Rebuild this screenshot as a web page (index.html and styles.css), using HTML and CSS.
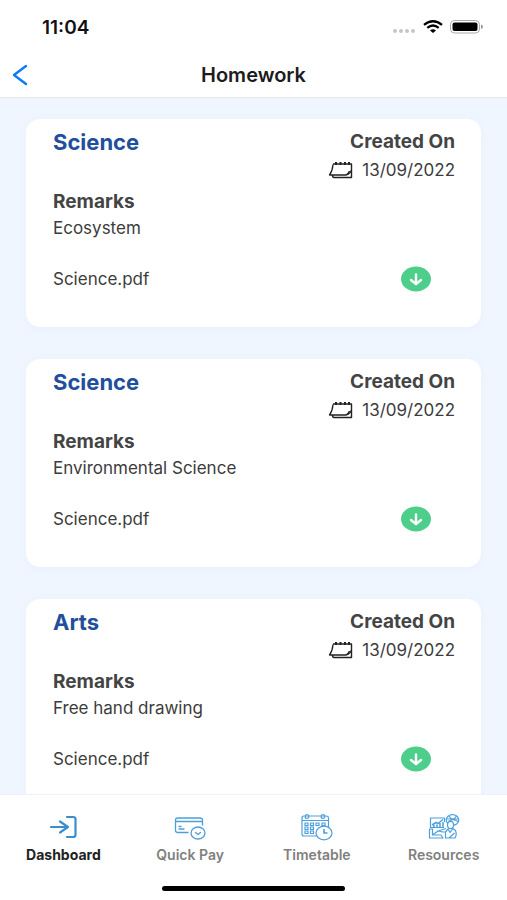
FILE: index.html
```html
<!DOCTYPE html>
<html lang="en">
<head>
<meta charset="UTF-8">
<meta name="viewport" content="width=device-width, initial-scale=1.0">
<title>Homework</title>
<link rel="stylesheet" href="styles.css">
</head>
<body>

<!-- shared icons -->
<svg class="sprite" aria-hidden="true">
  <symbol id="icon-date" viewBox="0 0 26 20">
    <path d="M5 4.500Q4.500 11 1.500 15H18Q20.500 13.500 21.500 11" fill="none" stroke="#222" stroke-width="1.300" stroke-linejoin="round"/>
    <path d="M5 4H23.500V17.500H6Q4.500 17.500 4.500 15" fill="none" stroke="#222" stroke-width="1.400" stroke-linejoin="round"/>
    <path d="M18 15Q22 14 23.500 10" fill="none" stroke="#222" stroke-width="1.200"/>
    <path d="M8 2V5M12.500 2V5M17 2V5M21 2V5" stroke="#222" stroke-width="2"/>
  </symbol>
  <symbol id="icon-download" viewBox="0 0 30 26">
    <ellipse cx="15" cy="13" rx="15" ry="12.500" fill="#4dcf8b"/>
    <path d="M15 8.500V17.500M10 14L15 18L20 14" fill="none" stroke="#fff" stroke-width="2.400" stroke-linecap="round" stroke-linejoin="round"/>
  </symbol>
</svg>

<header>
  <div class="status-bar">
    <span class="time">11:04</span>
    <div class="status-icons">
      <svg width="24" height="14" viewBox="0 0 24 14" aria-hidden="true">
        <g fill="#c6c6c6"><circle cx="3" cy="11" r="2"/><circle cx="9" cy="11" r="2"/><circle cx="15" cy="11" r="2"/><circle cx="21" cy="11" r="2"/></g>
      </svg>
      <svg width="20" height="14" viewBox="0 0 20 14" aria-hidden="true">
        <path d="M1 4.800Q10 -2.400 19 4.800M4.300 7.800Q10 3.200 15.700 7.800" fill="none" stroke="#000" stroke-width="2.300"/>
        <path d="M7 10.400Q10 8 13 10.400L10 13Z" fill="#000"/>
      </svg>
      <svg width="34" height="14" viewBox="0 0 34 14" aria-hidden="true">
        <rect x="0.500" y="0.500" width="29" height="12.500" rx="4" fill="none" stroke="#aaa"/>
        <rect x="2.500" y="2.500" width="25" height="8.500" rx="2" fill="#000"/>
        <path d="M31 4.500Q33 5 33 6.800Q33 8.500 31 9Z" fill="#999"/>
      </svg>
    </div>
  </div>
  <div class="nav-bar">
    <button class="back" type="button" aria-label="Back">
      <svg width="16" height="22" viewBox="0 0 16 22" aria-hidden="true"><path d="M14 2L2 11L14 20" fill="none" stroke="#0a7aff" stroke-width="2.400" stroke-linecap="round" stroke-linejoin="round"/></svg>
    </button>
    <h1>Homework</h1>
  </div>
</header>

<main>
  <article class="card">
    <div class="card-head">
      <h2>Science</h2>
      <div class="created">
        <h3>Created On</h3>
        <p class="date"><svg width="26" height="20" aria-hidden="true"><use href="#icon-date"/></svg>13/09/2022</p>
      </div>
    </div>
    <h3>Remarks</h3>
    <p>Ecosystem</p>
    <div class="file">
      <span>Science.pdf</span>
      <button type="button" aria-label="Download Science.pdf"><svg width="30" height="26" aria-hidden="true"><use href="#icon-download"/></svg></button>
    </div>
  </article>

  <article class="card">
    <div class="card-head">
      <h2>Science</h2>
      <div class="created">
        <h3>Created On</h3>
        <p class="date"><svg width="26" height="20" aria-hidden="true"><use href="#icon-date"/></svg>13/09/2022</p>
      </div>
    </div>
    <h3>Remarks</h3>
    <p>Environmental Science</p>
    <div class="file">
      <span>Science.pdf</span>
      <button type="button" aria-label="Download Science.pdf"><svg width="30" height="26" aria-hidden="true"><use href="#icon-download"/></svg></button>
    </div>
  </article>

  <article class="card">
    <div class="card-head">
      <h2>Arts</h2>
      <div class="created">
        <h3>Created On</h3>
        <p class="date"><svg width="26" height="20" aria-hidden="true"><use href="#icon-date"/></svg>13/09/2022</p>
      </div>
    </div>
    <h3>Remarks</h3>
    <p>Free hand drawing</p>
    <div class="file">
      <span>Science.pdf</span>
      <button type="button" aria-label="Download Science.pdf"><svg width="30" height="26" aria-hidden="true"><use href="#icon-download"/></svg></button>
    </div>
  </article>
</main>

<footer>
  <nav class="tabs">
    <a class="active" href="#dashboard">
      <svg width="32" height="28" viewBox="0 0 32 28" fill="none" stroke="#3c8dcc" stroke-width="2.200" stroke-linecap="round" stroke-linejoin="round" aria-hidden="true">
        <path d="M4 14H20M13 8.500L21 14L13 19.500M20 4H26Q28.500 4 28.500 6V22Q28.500 24 26 24H20"/>
      </svg>
      Dashboard
    </a>
    <a href="#quick-pay">
      <svg width="32" height="28" viewBox="0 0 32 28" fill="none" stroke="#4c9fdb" stroke-width="1.300" stroke-linecap="round" aria-hidden="true">
        <path d="M14 19.500H4Q1.500 19.500 1.500 17.500V7Q1.500 5 4 5H26Q28.500 5 28.500 7V12M2 8.500H28M5 13.500H7M5 16H10"/>
        <ellipse cx="24" cy="20" rx="7" ry="6"/>
        <path d="M21.500 19.500L24 21.500L26.500 19.500"/>
      </svg>
      Quick Pay
    </a>
    <a href="#timetable">
      <svg width="32" height="28" viewBox="0 0 32 28" fill="none" stroke="#4c9fdb" stroke-width="1.200" aria-hidden="true">
        <path d="M15 23H3Q1 23 1 21V5Q1 3 3 3H25Q27.500 3 27.500 5V14M1 7.500H27.500"/>
        <ellipse cx="6" cy="3.500" rx="1.800" ry="2"/><ellipse cx="22" cy="3.500" rx="1.800" ry="2"/>
        <path d="M4 10H7V12.500H4ZM9.500 10H12.500V12.500H9.500ZM15 10H18V12.500H15ZM21 10H24V12.500H21ZM4 14H7V16.500H4ZM9.500 14H12.500V16.500H9.500ZM4 18H7V20.500H4ZM9.500 18H12.500V20.500H9.500Z"/>
        <ellipse cx="23" cy="20" rx="8" ry="6.800" fill="#fff"/>
        <path d="M23 16V20H26.500" stroke-width="1.600"/>
      </svg>
      Timetable
    </a>
    <a href="#resources">
      <svg width="32" height="28" viewBox="0 0 32 28" fill="none" stroke="#4c9fdb" stroke-width="1.200" stroke-linejoin="round" aria-hidden="true">
        <path d="M16 14.500H2.500V5H16.500V9"/>
        <path d="M4 12L8 9.500L10 10.500L15 6.500M6 14V12M9 14V11.500M12 14V10M15 14V9" stroke-width="1.500"/>
        <path d="M1.500 16H4.500V22H13L15 25H1.500ZM4.500 22L10 18L18 15.500M10 18L15 19H19"/>
        <ellipse cx="24.500" cy="7" rx="6.300" ry="5.300"/>
        <path d="M19 6H30M21 3Q24.500 9 28.500 3M20.500 8.500Q24.500 5 30 8.500"/>
        <ellipse cx="22.500" cy="12" rx="3" ry="3.600" fill="#fff"/>
        <path d="M20 16L17.500 19V25H27Q29 22 27.500 17.500L25 15.500L22 19.500L20 16M21 25L26.500 20" fill="#fff"/>
      </svg>
      Resources
    </a>
  </nav>
  <div class="home-indicator"></div>
</footer>

</body>
</html>
```
FILE: styles.css
```css
* {
  box-sizing: border-box;
}
body {
  font-family: Inter, Roboto, sans-serif;
  background-color: #f0f6ff;
  color: #3c3c3c;
  margin: 0;
  display: flex;
  flex-direction: column;
  height: 100vh;
}
h1, h2, h3, p {
  margin: 0;
}
button {
  background: none;
  border: none;
  padding: 0;
  cursor: pointer;
}
svg {
  display: block;
}
.sprite {
  display: none;
}

/* top */
header {
  flex: none;
  background: #ffffff;
  border-bottom: 1px solid #e6e7ea;
}
.status-bar {
  display: flex;
  align-items: center;
  justify-content: space-between;
  height: 52px;
  padding: 2px 23px 0 42px;
}
.time {
  color: #111;
  font-size: 19px;
  font-weight: 600;
}
.status-icons {
  display: flex;
  gap: 7px;
}
.nav-bar {
  display: grid;
  grid-template-columns: 40px 1fr 40px;
  align-items: center;
  height: 45px;
  padding: 0 12px;
}
h1 {
  color: #1c1c1e;
  font-size: 20px;
  font-weight: 600;
  line-height: 24px;
  text-align: center;
}

/* homework list */
main {
  flex: 1;
  min-height: 0;
  overflow-y: auto;
  scrollbar-width: none;
  display: flex;
  flex-direction: column;
  gap: 32px;
  padding: 21px 26px;
}
.card {
  flex: none;
  background: #ffffff;
  border-radius: 14px;
  box-shadow: 0 2px 8px rgba(60, 90, 150, 0.04);
  padding: 9px 26px 35px 27px;
  font-size: 17px;
  line-height: 24px;
}
.card-head {
  display: flex;
  justify-content: space-between;
  margin-bottom: 4px;
}
h2 {
  color: #224f9c;
  font-size: 22px;
  font-weight: 700;
  line-height: 28px;
}
h3 {
  color: #444;
  font-size: 19px;
  font-weight: 700;
  line-height: 28px;
}
.created {
  text-align: right;
}
.date {
  display: flex;
  align-items: center;
  justify-content: flex-end;
  gap: 8px;
  line-height: 28px;
}
.file {
  display: flex;
  align-items: center;
  justify-content: space-between;
  margin-top: 26px;
  padding-right: 24px;
}

/* bottom tabs */
footer {
  flex: none;
  background: #ffffff;
  border-top: 1px solid #eef1f5;
  padding: 18px 0 9px;
}
.tabs {
  display: grid;
  grid-template-columns: repeat(4, 1fr);
}
.tabs a {
  display: flex;
  flex-direction: column;
  align-items: center;
  gap: 5px;
  color: #808080;
  font-size: 14px;
  font-weight: 600;
  line-height: 18px;
  text-decoration: none;
}
.tabs .active {
  color: #222;
  font-weight: 700;
}
.home-indicator {
  width: 36%;
  height: 5px;
  margin: 22px auto 0;
  border-radius: 3px;
  background: #000;
}
```
